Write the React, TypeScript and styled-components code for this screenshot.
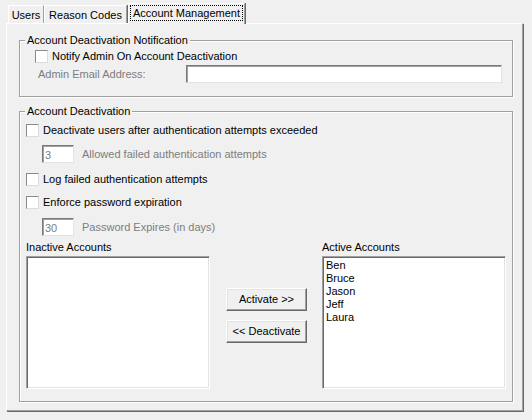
import React from "react";
import styled, { createGlobalStyle } from "styled-components";

const Global = createGlobalStyle`
  html, body { margin: 0; padding: 0; background: #f0f0f0; }
  body {
    font-family: "Liberation Sans", Arial, sans-serif;
    font-size: 11px;
    color: #000;
    width: 532px;
    height: 420px;
    overflow: hidden;
  }
`;

const Window = styled.div`
  padding-top: 3px;
  width: 532px;
  height: 417px;
  box-sizing: border-box;
`;

const TabStrip = styled.div`
  display: flex;
  align-items: flex-end;
  height: 20px;
  margin-left: 8px;
  position: relative;
  z-index: 1;
`;

const Tab = styled.div<{ $active?: boolean; $w: number }>`
  box-sizing: border-box;
  width: ${(p) => p.$w}px;
  height: ${(p) => (p.$active ? 21 : 18)}px;
  margin-bottom: ${(p) => (p.$active ? -1 : 0)}px;
  margin-left: ${(p) => (p.$active ? 1 : 0)}px;
  background: #f0f0f0;
  border-top: 1px solid #fff;
  border-left: 1px solid #fff;
  border-right: 1px solid #a0a0a0;
  box-shadow: 1px 0 0 #696969;
  display: flex;
  align-items: flex-start;
  justify-content: center;
  padding-top: ${(p) => (p.$active ? 2 : 3)}px;
  line-height: 13px;
  white-space: nowrap;
`;

const Focus = styled.span`
  outline: 1px dotted #000;
  outline-offset: 0;
  padding: 1px 2px 0 2px;
  line-height: 13px;
`;

const Panel = styled.div`
  margin-left: 6px;
  width: 517px;
  height: 388px;
  box-sizing: border-box;
  border-top: 1px solid #fff;
  border-left: 1px solid #fff;
  border-right: 1px solid #a0a0a0;
  border-bottom: 1px solid #a0a0a0;
  box-shadow: 1px 1px 0 #696969;
  padding: 16px 0 0 12px;
`;

const Group = styled.div<{ $h: number; $mt?: number }>`
  box-sizing: border-box;
  width: 494px;
  height: ${(p) => p.$h}px;
  margin-top: ${(p) => p.$mt ?? 0}px;
  border: 1px solid #a0a0a0;
  box-shadow: 1px 1px 0 #fff, inset 1px 1px 0 #fff;
  display: flex;
  flex-direction: column;
`;

const Caption = styled.div`
  align-self: flex-start;
  margin: -7px 0 0 5px;
  padding: 0 2px;
  background: #f0f0f0;
  line-height: 13px;
  white-space: nowrap;
`;

const CheckRow = styled.label<{ $mt: number; $ml: number }>`
  display: flex;
  align-items: center;
  height: 13px;
  margin-top: ${(p) => p.$mt}px;
  margin-left: ${(p) => p.$ml}px;
  line-height: 13px;
  white-space: nowrap;
`;

const Box = styled.span`
  box-sizing: border-box;
  width: 13px;
  height: 13px;
  flex: none;
  background: #fff;
  border-top: 1px solid #8a8a8a;
  border-left: 1px solid #8a8a8a;
  border-right: 1px solid #dcdcdc;
  border-bottom: 1px solid #dcdcdc;
  margin-right: 4px;
`;

const FieldRow = styled.div<{ $mt: number; $ml: number }>`
  display: flex;
  align-items: center;
  height: 18px;
  margin-top: ${(p) => p.$mt}px;
  margin-left: ${(p) => p.$ml}px;
  white-space: nowrap;
`;

const DimLabel = styled.span<{ $w?: number }>`
  color: #7d7d7d;
  width: ${(p) => (p.$w ? `${p.$w}px` : "auto")};
  flex: none;
  line-height: 13px;
`;

const TextBox = styled.div<{ $w: number; $disabled?: boolean }>`
  box-sizing: border-box;
  width: ${(p) => p.$w}px;
  height: 18px;
  flex: none;
  background: #fff;
  border-top: 1px solid #7a7a7a;
  border-left: 1px solid #7a7a7a;
  border-right: 1px solid #e3e3e3;
  border-bottom: 1px solid #e3e3e3;
  box-shadow: inset 1px 1px 0 #a0a0a0;
  color: #7d7d7d;
  padding: 3px 0 0 2px;
  line-height: 13px;
  margin-right: ${(p) => (p.$disabled ? 8 : 0)}px;
`;

const Lists = styled.div`
  display: flex;
  margin: 5px 0 0 6px;
`;

const ListColumn = styled.div`
  display: flex;
  flex-direction: column;
  width: 184px;
`;

const ListLabel = styled.div`
  line-height: 13px;
  height: 13px;
  margin-bottom: 2px;
`;

const ListBox = styled.div`
  box-sizing: border-box;
  height: 133px;
  background: #fff;
  border-top: 1px solid #a0a0a0;
  border-left: 1px solid #a0a0a0;
  border-right: 1px solid #fff;
  border-bottom: 1px solid #fff;
  box-shadow: inset 1px 1px 0 #696969, inset -1px -1px 0 #e3e3e3;
  padding: 2px 0 0 3px;
`;

const ListItem = styled.div`
  line-height: 13px;
  height: 13px;
`;

const ButtonColumn = styled.div`
  display: flex;
  flex-direction: column;
  gap: 9px;
  width: 81px;
  margin: 0 15px 0 16px;
  padding-top: 47px;
`;

const Button = styled.button`
  box-sizing: border-box;
  width: 81px;
  height: 23px;
  padding: 0;
  font: inherit;
  color: #000;
  background: #f0f0f0;
  border-top: 1px solid #fff;
  border-left: 1px solid #fff;
  border-right: 1px solid #696969;
  border-bottom: 1px solid #696969;
  box-shadow: inset -1px -1px 0 #a0a0a0, inset 1px 1px 0 #e3e3e3;
  border-radius: 0;
  line-height: 13px;
`;

const active = ["Ben", "Bruce", "Jason", "Jeff", "Laura"];

export default function App() {
  return (
    <Window>
      <Global />
      <TabStrip>
        <Tab $w={36}>Users</Tab>
        <Tab $w={83}>Reason Codes</Tab>
        <Tab $active $w={117}>
          <Focus>Account Management</Focus>
        </Tab>
      </TabStrip>
      <Panel>
        <Group $h={57}>
          <Caption>Account Deactivation Notification</Caption>
          <CheckRow $mt={3} $ml={15}>
            <Box />
            Notify Admin On Account Deactivation
          </CheckRow>
          <FieldRow $mt={2} $ml={18}>
            <DimLabel $w={148}>Admin Email Address:</DimLabel>
            <TextBox $w={316} />
          </FieldRow>
        </Group>
        <Group $h={291} $mt={14}>
          <Caption>Account Deactivation</Caption>
          <CheckRow $mt={6} $ml={6}>
            <Box />
            Deactivate users after authentication attempts exceeded
          </CheckRow>
          <FieldRow $mt={8} $ml={22}>
            <TextBox $w={32} $disabled>
              3
            </TextBox>
            <DimLabel>Allowed failed authentication attempts</DimLabel>
          </FieldRow>
          <CheckRow $mt={10} $ml={6}>
            <Box />
            Log failed authentication attempts
          </CheckRow>
          <CheckRow $mt={10} $ml={6}>
            <Box />
            Enforce password expiration
          </CheckRow>
          <FieldRow $mt={9} $ml={22}>
            <TextBox $w={32} $disabled>
              30
            </TextBox>
            <DimLabel>Password Expires (in days)</DimLabel>
          </FieldRow>
          <Lists>
            <ListColumn>
              <ListLabel>Inactive Accounts</ListLabel>
              <ListBox />
            </ListColumn>
            <ButtonColumn>
              <Button>Activate &gt;&gt;</Button>
              <Button>&lt;&lt; Deactivate</Button>
            </ButtonColumn>
            <ListColumn>
              <ListLabel>Active Accounts</ListLabel>
              <ListBox>
                {active.map((n) => (
                  <ListItem key={n}>{n}</ListItem>
                ))}
              </ListBox>
            </ListColumn>
          </Lists>
        </Group>
      </Panel>
    </Window>
  );
}
